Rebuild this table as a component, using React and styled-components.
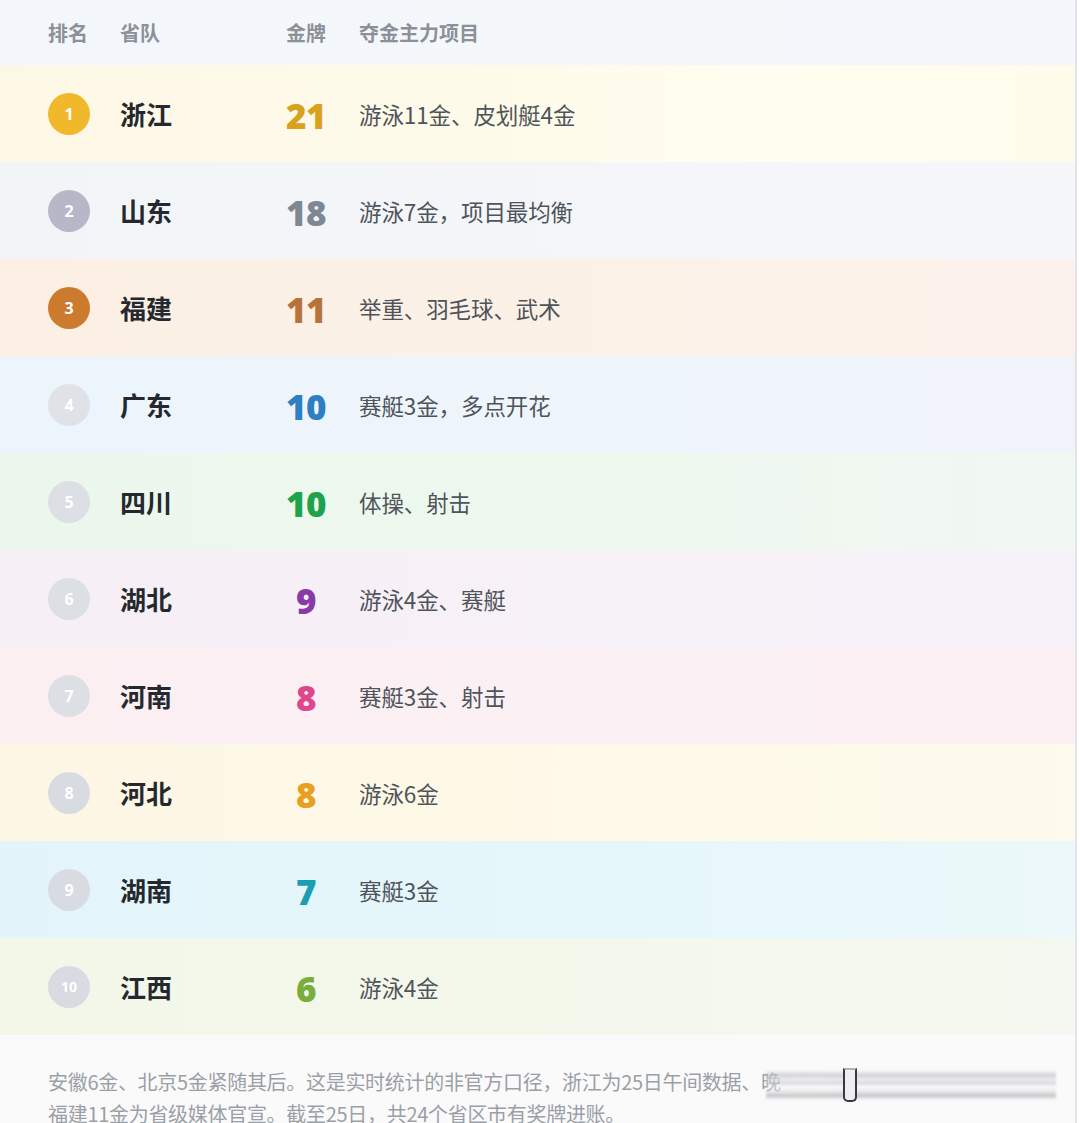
import React from "react";
import styled, { createGlobalStyle } from "styled-components";

const Global = createGlobalStyle`
  html, body { margin: 0; padding: 0; background: #ffffff; }
  body { font-family: "Noto Sans CJK SC", "Noto Sans", sans-serif; }
`;

const Page = styled.div`
  width: 1075px;
  height: 1123px;
  overflow: hidden;
  border-right: 2px solid #e2e4e8;
  background: #fafbfc;
  display: flex;
  flex-direction: column;
`;

const Grid = styled.div`
  display: grid;
  grid-template-columns: 72px 158px 56px 1fr;
  align-items: center;
  padding-left: 48px;
  flex-shrink: 0;
`;

const HeaderRow = styled(Grid)`
  height: 65px;
  background: linear-gradient(90deg, #f3f6fa 0%, #f5f8fb 60%, #f4f7fb 100%);
  font-size: 20px;
  font-weight: 700;
  color: #8b9099;
`;

const HeadCell = styled.div`
  text-align: ${(p) => (p.$center ? "center" : "left")};
  padding-left: ${(p) => (p.$pad ? "25px" : "0")};
`;

const Row = styled(Grid)`
  height: 97px;
  background: ${(p) => p.$bg};
`;

const Badge = styled.div`
  width: 42px;
  height: 42px;
  border-radius: 50%;
  background: ${(p) => p.$color};
  color: #ffffff;
  display: flex;
  align-items: center;
  justify-content: center;
  font-family: "Open Sans", "Liberation Sans", sans-serif;
  font-weight: 700;
  font-size: ${(p) => (p.$small ? "14px" : "16px")};
`;

const Name = styled.div`
  font-size: 26px;
  font-weight: 700;
  color: #25292f;
`;

const Medals = styled.div`
  text-align: center;
  font-family: "Open Sans", "Liberation Sans", sans-serif;
  font-weight: 800;
  font-size: 35px;
  line-height: 1;
  padding-top: 4px;
  color: ${(p) => p.$color};
  letter-spacing: -0.5px;
`;

const Events = styled.div`
  padding-left: 25px;
  font-size: 22.5px;
  color: #4f545b;
  letter-spacing: -0.1px;
`;

const Footer = styled.div`
  position: relative;
  flex: 1;
  min-height: 0;
  padding: 31px 0 0 48px;
  font-size: 20px;
  line-height: 32px;
  color: #9b9fa6;
  letter-spacing: -0.3px;
  background: #fafafb;
`;

const Line = styled.p`
  margin: 0;
  white-space: nowrap;
`;

const Smear = styled.div`
  position: absolute;
  left: 766px;
  top: 35px;
  width: 290px;
  height: 30px;
  background:
    linear-gradient(180deg, transparent 0%, rgba(120,120,125,0.3) 18%, rgba(220,220,224,0.45) 30%, rgba(150,150,155,0.3) 45%, transparent 55%, rgba(190,190,195,0.35) 75%, rgba(120,120,125,0.4) 85%, transparent 100%),
    linear-gradient(90deg, rgba(250,250,251,0.3), rgba(250,250,251,0.95) 20%, rgba(250,250,251,0.95));
  filter: blur(1px);
`;

const SmearBar = styled.div`
  position: absolute;
  left: 843px;
  top: 33px;
  width: 10px;
  height: 30px;
  border: 2px solid #3a3a3e;
  border-top-color: #b0b0b4;
  border-radius: 0 0 5px 5px;
  background: rgba(240,240,242,0.9);
  filter: blur(0.6px);
`;

const rows = [
  { rank: 1, name: "浙江", medals: "21", events: "游泳11金、皮划艇4金", badge: "#f1b82c", num: "#d9a21c", bg: "linear-gradient(90deg,#fdf7e6 0%,#fefae9 40%,#fffdef 70%,#fffcec 100%)" },
  { rank: 2, name: "山东", medals: "18", events: "游泳7金，项目最均衡", badge: "#b6b8c8", num: "#7d8894", bg: "linear-gradient(90deg,#f2f5f8 0%,#f4f6f9 60%,#f5f7fa 100%)" },
  { rank: 3, name: "福建", medals: "11", events: "举重、羽毛球、武术", badge: "#cc7a2e", num: "#b8733c", bg: "linear-gradient(90deg,#fcf0e4 0%,#fbf1e7 60%,#fcf2ec 100%)" },
  { rank: 4, name: "广东", medals: "10", events: "赛艇3金，多点开花", badge: "#dfe2e6", num: "#2f7ec2", bg: "linear-gradient(90deg,#ecf5fb 0%,#eef5fb 60%,#f1f3fa 100%)" },
  { rank: 5, name: "四川", medals: "10", events: "体操、射击", badge: "#dcdfe3", num: "#1ea24b", bg: "linear-gradient(90deg,#ebf7ec 0%,#eef8ef 60%,#f1f7f1 100%)" },
  { rank: 6, name: "湖北", medals: "9", events: "游泳4金、赛艇", badge: "#dcdfe3", num: "#8a3aa6", bg: "linear-gradient(90deg,#f6eff5 0%,#f7f1f8 60%,#f7f2f9 100%)" },
  { rank: 7, name: "河南", medals: "8", events: "赛艇3金、射击", badge: "#dcdfe3", num: "#df468c", bg: "linear-gradient(90deg,#fbeff2 0%,#fbf0f4 60%,#fcf0f5 100%)" },
  { rank: 8, name: "河北", medals: "8", events: "游泳6金", badge: "#d9dbe3", num: "#e8a022", bg: "linear-gradient(90deg,#fdf6e4 0%,#fef9e8 60%,#fefaec 100%)" },
  { rank: 9, name: "湖南", medals: "7", events: "赛艇3金", badge: "#d9dbe3", num: "#1a9fb0", bg: "linear-gradient(90deg,#e3f5fa 0%,#e6f7fb 60%,#ecf8fa 100%)" },
  { rank: 10, name: "江西", medals: "6", events: "游泳4金", badge: "#d9dbe3", num: "#79ad3c", bg: "linear-gradient(90deg,#f2f7e8 0%,#f4f8ec 60%,#f4f8f0 100%)" },
];

export default function App() {
  return (
    <>
      <Global />
      <Page>
        <HeaderRow>
          <HeadCell>排名</HeadCell>
          <HeadCell>省队</HeadCell>
          <HeadCell $center>金牌</HeadCell>
          <HeadCell $pad>夺金主力项目</HeadCell>
        </HeaderRow>
        {rows.map((r) => (
          <Row key={r.rank} $bg={r.bg}>
            <Badge $color={r.badge} $small={r.rank === 10}>
              {r.rank}
            </Badge>
            <Name>{r.name}</Name>
            <Medals $color={r.num}>{r.medals}</Medals>
            <Events>{r.events}</Events>
          </Row>
        ))}
        <Footer>
          <Line>安徽6金、北京5金紧随其后。这是实时统计的非官方口径，浙江为25日午间数据、晚</Line>
          <Line>福建11金为省级媒体官宣。截至25日，共24个省区市有奖牌进账。</Line>
          <Smear />
          <SmearBar />
        </Footer>
      </Page>
    </>
  );
}
